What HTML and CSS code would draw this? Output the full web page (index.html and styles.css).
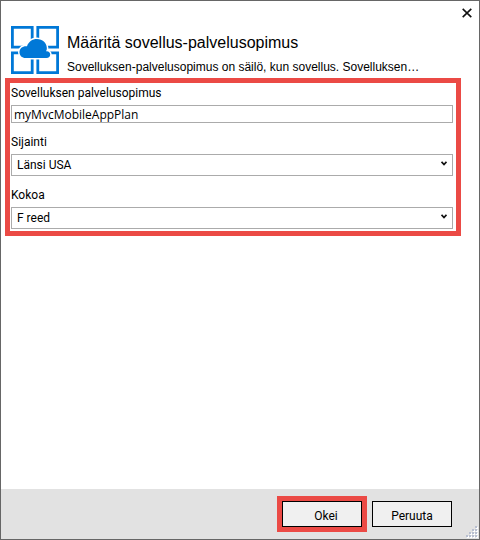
FILE: index.html
```html
<!DOCTYPE html>
<html lang="fi">
<head>
<meta charset="utf-8">
<title>Määritä sovellus-palvelusopimus</title>
<link rel="stylesheet" href="styles.css">
</head>
<body>
<form class="dialog">
  <div class="titlebar">
    <button class="close" type="button" aria-label="Sulje">
      <svg width="10" height="10" viewBox="0 0 10 10" fill="none" stroke="#111" stroke-width="1.6"><path d="M.7.9l8.6 8.2M9.3.9L.7 9.1"/></svg>
    </button>
  </div>
  <header class="header">
    <svg class="logo" width="48" height="48" viewBox="0 0 48 48" aria-hidden="true">
      <g fill="none" stroke="#0078d7" stroke-width="2.8">
        <path d="M21.200 14V1.400H1.400V21.200H12"/>
        <path d="M26.800 14V1.400H46.600V21.200H34"/>
        <path d="M12 26.800H1.400V46.600H21.200V30"/>
        <path d="M26.800 30V46.600H46.600V26.800H34"/>
      </g>
      <path stroke="#fff" stroke-width="3" fill="#fff" d="M14.500 32C11 32 8.500 29.600 8.500 26.200C8.500 22.200 12 19.800 16 20.300C17.500 15.500 21.500 13 26 13C31.500 13 35.500 17 35.800 21.500C36 23 35.600 24.500 35 25.300C37.500 24.800 39.200 26.500 39.200 28.500C39.200 30.500 37.800 32 35.500 32Z"/>
      <path fill="#0078d7" d="M14.500 32C11 32 8.500 29.600 8.500 26.200C8.500 22.200 12 19.800 16 20.300C17.500 15.500 21.500 13 26 13C31.500 13 35.500 17 35.800 21.500C36 23 35.600 24.500 35 25.300C37.500 24.800 39.200 26.500 39.200 28.500C39.200 30.500 37.800 32 35.500 32Z"/>
    </svg>
    <div class="heading">
      <h1 class="title">Määritä sovellus-palvelusopimus</h1>
      <p class="subtitle">Sovelluksen-palvelusopimus on säilö, kun sovellus. Sovelluksen…</p>
    </div>
  </header>
  <main class="fields">
    <label class="label" for="plan">Sovelluksen palvelusopimus</label>
    <input class="control text" id="plan" type="text" value="myMvcMobileAppPlan">
    <label class="label" for="region">Sijainti</label>
    <div class="picker">
      <select class="control select" id="region"><option>Länsi USA</option></select>
      <svg class="chevron" width="6" height="5" viewBox="0 0 6 5" fill="none" stroke="#111" stroke-width="1.800"><path d="M.5.8L3 3.500L5.500.8"/></svg>
    </div>
    <label class="label" for="size">Kokoa</label>
    <div class="picker">
      <select class="control select" id="size"><option>F reed</option></select>
      <svg class="chevron" width="6" height="5" viewBox="0 0 6 5" fill="none" stroke="#111" stroke-width="1.800"><path d="M.5.8L3 3.500L5.500.8"/></svg>
    </div>
  </main>
  <footer class="footer">
    <div class="highlight"><button class="button" type="submit">Okei</button></div>
    <button class="button" type="button">Peruuta</button>
    <svg class="grip" width="12" height="12" viewBox="0 0 12 12" aria-hidden="true">
      <path fill="#fff" d="M10 1h2v2h-2zM7 4h2v2H7zM10 4h2v2h-2zM4 7h2v2H4zM7 7h2v2H7zM10 7h2v2h-2zM1 10h2v2H1zM4 10h2v2H4zM7 10h2v2H7zM10 10h2v2h-2z"/>
      <path fill="#b8bfd0" d="M9 0h2v2H9zM6 3h2v2H6zM9 3h2v2H9zM3 6h2v2H3zM6 6h2v2H6zM9 6h2v2H9zM0 9h2v2H0zM3 9h2v2H3zM6 9h2v2H6zM9 9h2v2H9z"/>
    </svg>
  </footer>
</form>
</body>
</html>
```
FILE: styles.css
```css
* {
  box-sizing: border-box;
}

body {
  margin: 0;
  background: #fff;
  color: #000;
  font: 12px/16px Roboto, "Liberation Sans", sans-serif;
}

.dialog {
  display: flex;
  flex-direction: column;
  min-height: 100vh;
  border: 1px solid #666;
}

.titlebar {
  display: flex;
  justify-content: flex-end;
  padding: 3px 3px 0 0;
}

.close {
  display: grid;
  place-items: center;
  width: 18px;
  height: 18px;
  padding: 0;
  border: 0;
  background: none;
}

.header {
  display: flex;
  gap: 8px;
  padding: 4px 18px 0 10px;
  font-family: "Liberation Sans", Arial, sans-serif;
}

.logo {
  flex: none;
}

.heading {
  min-width: 0;
  padding-top: 7px;
}

.title {
  margin: 0;
  font-size: 16px;
  font-weight: 400;
  line-height: 20px;
}

.subtitle {
  margin: 6px 0 0;
  overflow: hidden;
  white-space: nowrap;
  text-overflow: ellipsis;
}

.fields {
  display: flex;
  flex-direction: column;
  margin: 3px 18px 0 4px;
  padding: 2px 3px 2px 1px;
  border: 5px solid #eb4a45;
}

.label {
  margin-bottom: 4px;
}

.control {
  display: block;
  width: 100%;
  margin: 0;
  border: 1px solid #ababab;
  border-radius: 0;
  background: #fff;
  color: #000;
}

.text {
  height: 18px;
  margin-bottom: 11px;
  padding: 0 2px;
  font: 12px/16px "Open Sans", "Noto Sans", sans-serif;
}

.picker {
  position: relative;
}

.picker + .label {
  margin-top: 11px;
}

.select {
  height: 22px;
  padding: 0 5px;
  appearance: none;
  font: inherit;
}

.chevron {
  position: absolute;
  top: 7px;
  right: 6px;
  pointer-events: none;
}

.footer {
  position: relative;
  display: flex;
  align-items: center;
  justify-content: flex-end;
  gap: 5px;
  height: 50px;
  margin-top: auto;
  padding-right: 27px;
  background: #e2e2e2;
}

.highlight {
  border: 5px solid #eb4a45;
}

.button {
  display: block;
  width: 80px;
  height: 26px;
  padding: 3px 0 0;
  border: 1px solid #000;
  background: #f0f0f0;
  color: #000;
  font: inherit;
}

.highlight .button {
  padding-left: 8px;
}

.grip {
  position: absolute;
  right: 1px;
  bottom: 1px;
}
```
